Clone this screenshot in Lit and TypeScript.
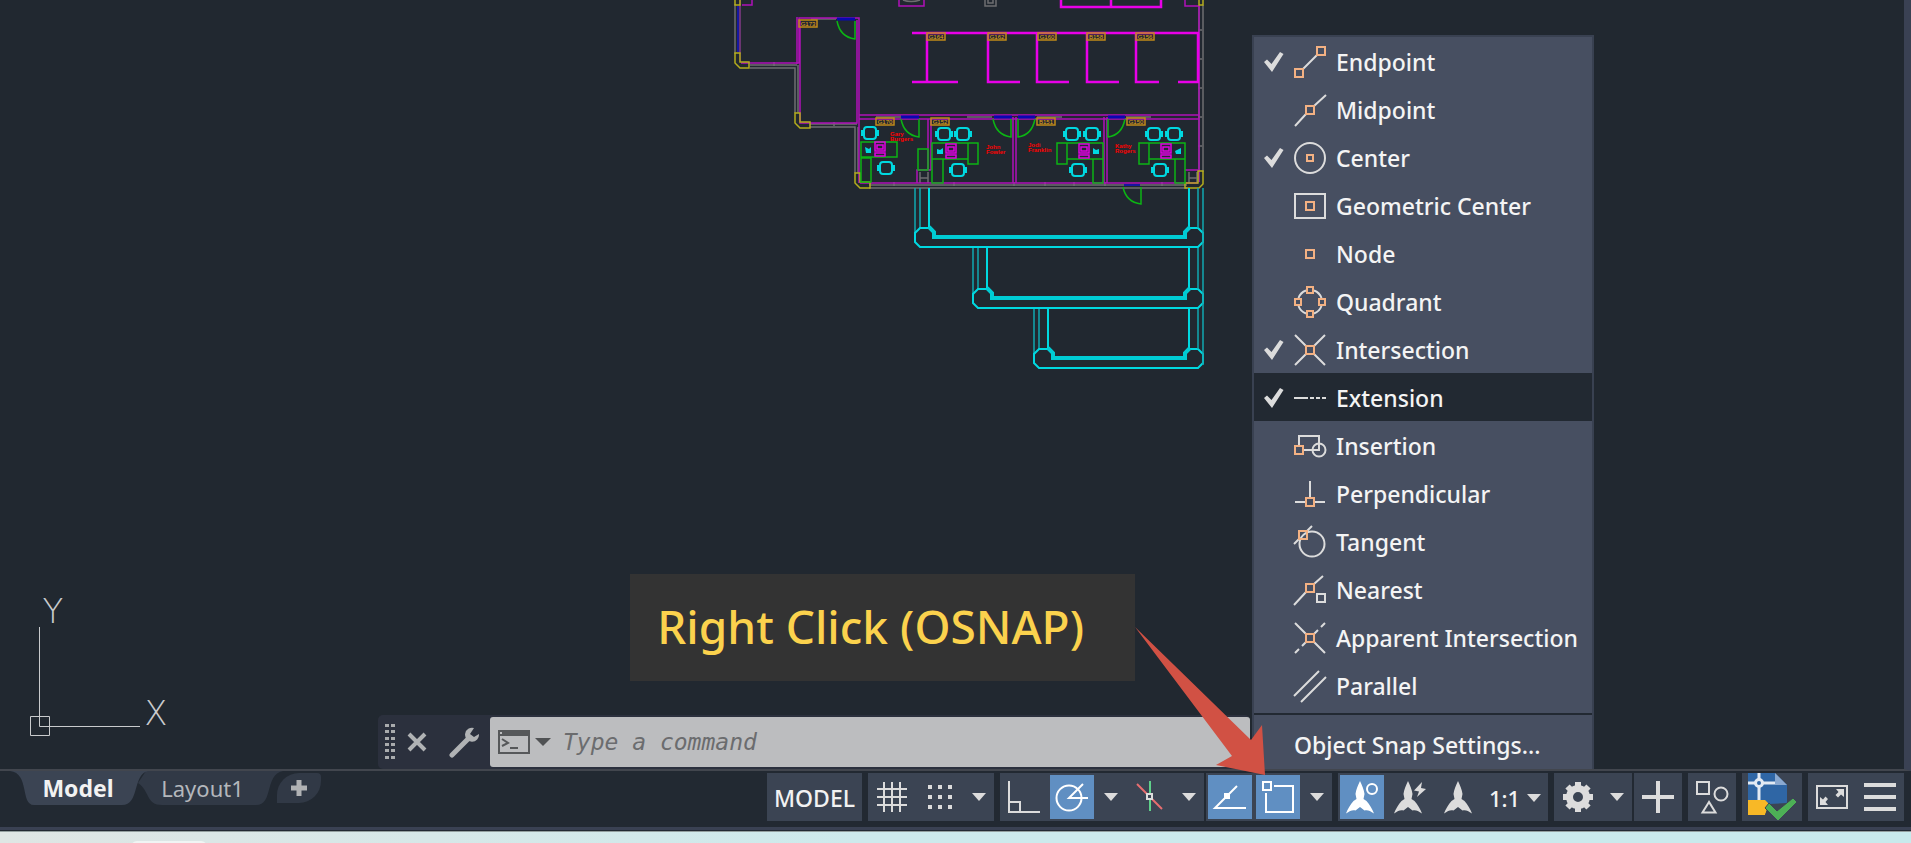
import { LitElement, html, svg, css } from "lit";
import { customElement, state } from "lit/decorators.js";
import { classMap } from "lit/directives/class-map.js";

const box = (cx: number, cy: number, s = 8) =>
  svg`<rect class="o" x=${cx - s / 2} y=${cy - s / 2} width=${s} height=${s} />`;

const snapIcons: Record<string, unknown> = {
  Endpoint: svg`<path d="M9 23L23 9" />${box(27, 5)}${box(5, 27)}`,
  Midpoint: svg`<path d="M1 32L12 20M20 12L32 1" />${box(16, 16)}`,
  Center: svg`<circle cx="16" cy="16" r="15" />${box(16, 16, 6)}`,
  "Geometric Center": svg`<rect x="1" y="4" width="30" height="24" />${box(16, 16)}`,
  Node: svg`${box(16, 16)}`,
  Quadrant: svg`<path d="M20 4.5A12.500 12.500 0 0 1 27.500 12M27.500 20A12.500 12.500 0 0 1 20 27.500M12 27.500A12.500 12.500 0 0 1 4.500 20M4.500 12A12.500 12.500 0 0 1 12 4.500" />${box(16, 4, 6)}${box(4, 16, 6)}${box(28, 16, 6)}${box(16, 28, 6)}`,
  Intersection: svg`<path d="M1 1L12 12M20 12L31 1M1 31L12 20M20 20L31 31" />${box(16, 16)}`,
  Extension: svg`<path d="M0 16H14M16 16H20M22 16H26M28 16H32" />`,
  Insertion: svg`<path d="M5 15V6H25V20H9" /><circle cx="25" cy="20" r="6.500" />${box(5, 20)}`,
  Perpendicular: svg`<path d="M16 3V20M1 24H12M20 24H31" />${box(16, 24)}`,
  Tangent: svg`<path d="M0 18L5 13M13 5L18 0" /><circle cx="18" cy="18" r="12.500" />${box(9, 9)}`,
  Nearest: svg`<path d="M0 31L12 18M20 10L29 2" />${box(16, 14)}<rect x="23" y="20" width="8" height="8" />`,
  "Apparent Intersection": svg`<path d="M1 1L12 12M20 20L31 31M20 12L24 8M27 5L31 1M1 31L5 27M8 24L12 20" />${box(16, 16)}`,
  Parallel: svg`<path d="M0 26L25 1M7 32L32 7" />`,
};

const compass = (x: number) =>
  svg`<path class="f" transform="translate(${x} 0)" d="M0 0C2 4 4 9 4.500 13L3.500 18L6.500 20C9.500 23.500 12.500 28 14 32.500C10 29.500 7 28.500 4.500 29.500L0 26L-4.500 29.500C-7 28.500 -10 29.500 -14 32.500C-12.500 28 -9.500 23.500 -6.500 20L-3.500 18L-4.500 13C-4 9 -2 4 0 0Z" />`;

const barIcons = {
  grid: svg`<path d="M8 1V31M16 1V31M24 1V31M1 8H31M1 16H31M1 24H31" />`,
  snap: svg`${[6, 16, 26].map((y) => [6, 16, 26].map((x) => svg`<rect class="f" x=${x - 2} y=${y - 2} width="4" height="4" />`))}`,
  ortho: svg`<path d="M1 0V31H32M1 21H12V31" />`,
  polar: svg`<circle cx="13" cy="17" r="12.500" /><path d="M32 17H13L27 3" />`,
  iso: svg`<path class="red" d="M3 3L28 28" /><path class="green" d="M16 0V30" /><rect class="hub" x="13" y="13" width="5" height="5" />`,
  track: svg`<path d="M32 27H1L23 5" /><rect class="f" x="10" y="12" width="6" height="6" />`,
  osnap: svg`<rect x="1" y="1" width="8" height="8" /><path d="M12 5H31V31H4V12" />`,
  annoVisible: svg`${compass(14)}<circle cx="26" cy="8" r="5" />`,
  annoAuto: svg`${compass(14)}<path class="f" d="M28 1L20 9.500L25 10.500L23 16L32 8L27 7Z" />`,
  annoScale: svg`${compass(16)}`,
  gear: svg`<circle cx="16" cy="16" r="8.500" class="gear" /><path class="teeth" d="M16 1V6M16 26V31M1 16H6M26 16H31M5.500 5.500L9 9M23 23L26.500 26.500M5.500 26.500L9 23M23 9L26.500 5.500" />`,
  plus: svg`<path class="heavy" d="M16 0V32M0 16H32" />`,
  isolate: svg`<rect x="1" y="1" width="12" height="12" /><circle cx="25" cy="13" r="6.500" /><path d="M13 21L6.500 31.500H19.500Z" />`,
  full: svg`<rect x="1" y="5" width="30" height="22" /><path class="f" d="M20 8H28V16L25 13.500L22 16.500L19.500 14L22.500 11Z M4 24V16L7 18.500L9.500 15.500L12 18L9.500 21L12 24Z" />`,
  menu: svg`<path class="heavy" d="M0 4H32M0 16H32M0 28H32" />`,
};

type IconName = keyof typeof barIcons;

const sharedIcon = css`
  svg { display: block; fill: none; stroke: #dcdcdc; stroke-width: 2; }
  .f { fill: #dcdcdc; stroke: none; }
`;

@customElement("floor-plan")
class FloorPlan extends LitElement {
  static styles = css`
    :host { display: block; }
    svg { display: block; fill: none; overflow: hidden; }
    .gray { stroke: #6d6e70; stroke-width: 1.500; }
    .mag { stroke: #b010b8; stroke-width: 1.500; }
    .magb { stroke: #e800e8; stroke-width: 2.500; }
    .pc { stroke: #e000e0; stroke-width: 1.500; }
    .yel { stroke: #b5ad1c; stroke-width: 1.500; }
    .blue { stroke: #0808b0; stroke-width: 3; }
    .green { stroke: #0cb414; stroke-width: 1.500; }
    .cy { stroke: #00d8e0; stroke-width: 2; }
    .cyd { stroke: #10a8b0; stroke-width: 1.500; }
    .cyf { fill: #00d8e0; }
    .bar { stroke: #00ccd4; stroke-width: 4; }
    .tag { stroke: #c08a18; stroke-width: 1.500; }
    .tagt { fill: #e8a818; font: 6px "Liberation Sans", sans-serif; text-anchor: middle; }
    .name { fill: #ff0000; font: bold 6px "Liberation Sans", sans-serif; }
    .ucs { stroke: #c9cbcd; stroke-width: 1; }
    .axis { fill: #c9cbcd; font: 200 34px "DejaVu Sans", sans-serif; text-anchor: middle; }
  `;

  private tag(x: number, y: number, t: string) {
    return svg`<rect class="tag" x=${x} y=${y} width="18" height="7" /><text class="tagt" x=${x + 9} y=${y + 6}>${t}</text>`;
  }

  private chair(x: number, y: number) {
    return svg`<rect class="cy" x=${x - 6} y=${y - 6} width="12" height="12" rx="3" /><path class="cy" d="M${x - 8} ${y - 3}V${y + 3}M${x + 8} ${y - 3}V${y + 3}" />`;
  }

  private computer(x: number, y: number) {
    return svg`<path class="pc" d="M${x - 5} ${y - 7}h10v9h-10zM${x - 5} ${y + 4}h10v3h-10zM${x - 3} ${y - 4}h6v4h-6z" />`;
  }

  private stair(left: number, top: number, y: number) {
    return svg`
      <path class="cyd" d="M${left} ${top}V${y + 5}M${left + 5} ${top}V${y}" />
      <path class="cy" d="M${left + 14} ${top}V${y}M1189 ${top}V${y}" />
      <path class="cy" d="M${left + 14} ${y}H${left + 5}L${left} ${y + 5}V${y + 14}L${left + 5} ${y + 19}H1198L1203 ${y + 14}V${y + 5}L1198 ${y}H1189" />
      <path class="bar" d="M${left + 14} ${y - 1}L${left + 19} ${y + 4}V${y + 9}H1185V${y + 4}L1190 ${y - 1}" />`;
  }

  render() {
    return html`<svg width="1250" height="769" viewBox="0 0 1250 769" role="img" aria-label="Floor plan drawing">
      <path class="gray" d="M735 4V54M740 4V54M750 65H797M750 68H795V113M798 65V113M810 124H857M810 127H855V173M858 127V173M869 185H1187M869 188H1187M1199 5V172M1203 5V172" />
      <path class="gray" d="M811 19H836M876 117H905M967 117H992M1037 117H1062M1126 117H1151M985 0V6H996V0M988 0V3H993V0M903 0Q911 3 920 0M920 172V183M928 172V183M920 178H928M1189 172V183M1197 172V183M1189 178H1197" />
      <path class="gray" d="M774 62V66M834 122V126M894 182V186M954 182V186M1014 182V186M1045 182V186M1074 182V186M1105 182V186M1162 182V186M1198 30H1202M1198 59H1202M1198 88H1202M1198 117H1202M1198 146H1202" />
      <path class="mag" d="M742 5H752V0M741 63H799V18H859V183M797 64V17M800 20V123H857V20M859 115H1199M859 119H1199M860 183H1198M928 119V170M931 119V170M1013 117V183M1016 117V183M1104 117V183M1107 117V183M1199 6V182M899 0V6H924V0M1185 0V6H1199M917 183V170H931M1185 170H1198" />
      <path class="magb" d="M1061 0V7H1161V0M1111 0V7M912 33H1199M927 33V82M912 82H958M988 33V82H1020M1037 33V82H1069M1087 33V82H1119M1136 33V82H1159M1178 82H1198V33" />
      <path stroke="#7a1084" d="M740 0V62" />
      <path class="blue" d="M837 19H855M901 117H919M994 117H1012M1018 117H1035M1108 117H1125" />
      <path stroke="#1717a0" stroke-width="2" d="M738 6V52M1124 185H1140" />
      <path class="yel" d="M735 0V5H740V0M735 53H740V62H749V68H740L735 63ZM795 113H800V122H810V128H800L795 123ZM855 173H860V182H870V188H860L855 183ZM1198 171H1203V184L1199 188H1185V183H1198ZM1199 0V5H1203V0" />
      <path class="green" d="M837 21Q840 37 855 39V21M901 119Q904 135 919 137V119M993 119Q996 135 1011 137V119M1035 119Q1032 135 1018 137V119M1125 119Q1122 135 1108 137V119M1123 187Q1126 202 1141 204V187" />
      <path class="green" d="M861 142H897V157H861ZM861 158H871V182H861ZM918 149H928V170H918ZM932 143H968V159H932ZM932 159H943V183H932ZM968 143H978V164H968ZM1057 143H1067V164H1057ZM1067 143H1103V159H1067ZM1093 159H1103V183H1093ZM1139 143H1149V164H1139ZM1149 143H1185V159H1149ZM1175 159H1185V183H1175Z" />
      ${[[870, 133], [886, 168], [944, 134], [963, 134], [958, 170], [1072, 134], [1092, 134], [1078, 170], [1154, 134], [1174, 134], [1160, 170]].map(([x, y]) => this.chair(x, y))}
      ${[[880, 149], [951, 151], [1084, 151], [1166, 151]].map(([x, y]) => this.computer(x, y))}
      <path class="cyf" d="M865 147L869 149L871 147V153H866ZM937 149L940 150L943 148V154H937ZM1093 148L1096 150L1099 149V154H1093ZM1175 151L1181 148V154H1176Z" />
      ${[[799, 20, "G173"], [927, 33, "G164"], [988, 33, "G162"], [1038, 33, "G160"], [1087, 33, "B158"], [1136, 33, "G156"], [876, 118, "G170"], [931, 118, "G152"], [1037, 118, "B151"], [1127, 118, "G150"]].map(([x, y, t]) => this.tag(x as number, y as number, t as string))}
      ${[[890, 136, "Gary", "Burgers"], [986, 149, "John", "Fowler"], [1028, 147, "Jodi", "Franklin"], [1115, 148, "Kathy", "Rogers"]].map(([x, y, a, b]) => svg`<text class="name" x=${x} y=${y}>${a}</text><text class="name" x=${x} y=${(y as number) + 5}>${b}</text>`)}
      ${this.stair(915, 188, 228)}${this.stair(973, 248, 289)}${this.stair(1034, 309, 349)}
      <path class="cyd" d="M1203 188V365M1198 188V228M1198 248V289M1198 309V349" />
      <path class="ucs" d="M39.500 627V726.500H140M30.500 716.500H49.500V735.500H30.500Z" />
      <text class="axis" x="53" y="623">Y</text>
      <text class="axis" x="156" y="725">X</text>
    </svg>`;
  }
}

@customElement("snap-menu")
class SnapMenu extends LitElement {
  @state() private checked = new Set(["Endpoint", "Center", "Intersection", "Extension"]);

  static styles = [sharedIcon, css`
    :host { display: block; background: #474f61; border: 2px solid #394151; border-bottom: 0; }
    button {
      display: flex; align-items: center; gap: 10px; width: 100%; height: 48px; padding: 2px 16px 0 10px;
      border: 0; background: none; color: #f4f4f4; text-align: left; white-space: nowrap;
      font: 500 23px/32px "Noto Sans", "Open Sans", sans-serif;
    }
    .current { background: #222932; }
    .tick { flex: none; width: 20px; height: 20px; }
    .icon { flex: none; width: 32px; height: 32px; overflow: visible; }
    .o { stroke: #f3b183; }
    hr { height: 2px; margin: 4px 0 0; border: 0; background: #222932; }
    .settings { height: 54px; padding: 5px 0 0 40px; }
  `];

  private toggle(name: string) {
    const next = new Set(this.checked);
    next.has(name) ? next.delete(name) : next.add(name);
    this.checked = next;
  }

  render() {
    return html`<div role="menu" aria-label="Object snap">
      ${Object.entries(snapIcons).map(([name, icon]) => html`
        <button role="menuitemcheckbox" aria-checked=${this.checked.has(name)} class=${classMap({ current: name === "Extension" })} @click=${() => this.toggle(name)}>
          <svg class="tick" viewBox="0 0 20 20">${this.checked.has(name) ? svg`<path class="f" d="M0 10L3 7.500L7.500 12L16 0L19.500 2L8 20Z" />` : null}</svg>
          <svg class="icon" viewBox="0 0 32 32">${icon}</svg>
          <span>${name}</span>
        </button>`)}
      <hr />
      <button role="menuitem" class="settings">Object Snap Settings...</button>
    </div>`;
  }
}

@customElement("command-line")
class CommandLine extends LitElement {
  static styles = css`
    :host { display: flex; height: 54px; background: #2b303d; border-radius: 5px; }
    button { display: flex; align-items: center; justify-content: center; padding: 0; border: 0; background: none; }
    svg { display: block; }
    .grip { width: 10px; margin: 0 8px 0 7px; fill: #a9abad; align-self: center; }
    .close { width: 28px; }
    .wrench { width: 59px; padding-left: 8px; box-sizing: border-box; }
    .field { display: flex; flex: 1; align-items: center; margin: 2px 0; background: #bcbdbf; border-radius: 3px; }
    .recent { gap: 5px; padding: 0 8px; }
    input {
      flex: 1; min-width: 0; height: 48px; padding: 0 4px; border: 0; outline: 0; background: none; color: #333;
      font: italic 23px/32px "DejaVu Sans Mono", monospace;
    }
    input::placeholder { color: #6b6c6e; opacity: 1; }
  `;

  render() {
    return html`
      <svg class="grip" width="10" height="38" viewBox="0 0 10 38">${[1, 7, 14, 20, 26, 33].map((y) => svg`<path d="M0 ${y}h4v3h-4zM6 ${y}h4v3h-4z" />`)}</svg>
      <button class="close" aria-label="Close"><svg width="20" height="20" viewBox="0 0 20 20" stroke="#b0b2b4" stroke-width="4"><path d="M2 2L18 18M18 2L2 18" /></svg></button>
      <button class="wrench" aria-label="Customize"><svg width="32" height="32" viewBox="0 0 32 32" fill="none"><path d="M3 29L20 12" stroke="#b0b2b4" stroke-width="5" stroke-linecap="round" /><path d="M25 2A7 7 0 1 0 30 8L25 11L21 8Z" fill="#b0b2b4" /></svg></button>
      <div class="field">
        <button class="recent" aria-label="Recent commands">
          <svg width="32" height="24" viewBox="0 0 32 24" fill="none" stroke="#56585a" stroke-width="2"><path d="M1 1H31V23H1Z" /><path fill="#56585a" stroke="none" d="M0 0H32V6H0Z" /><path d="M4 9L10 13L4 16" /><path d="M12 18H20" /><path stroke="#bcbdbf" d="M2 3H4" /></svg>
          <svg width="16" height="8" viewBox="0 0 16 8" fill="#505254"><path d="M0 0H16L8 8Z" /></svg>
        </button>
        <input type="text" aria-label="Command" placeholder="Type a command" />
      </div>`;
  }
}

@customElement("status-bar")
class StatusBar extends LitElement {
  static styles = [sharedIcon, css`
    :host { display: flex; justify-content: space-between; align-items: flex-start; height: 54px; padding: 2px 7px 0 10px; background: #222932; }
    button {
      display: flex; align-items: center; justify-content: center; flex: none; height: 44px; padding: 0; border: 0; background: none;
      color: #f2f2f2; font: 500 23px/32px "Noto Sans", "Open Sans", sans-serif; white-space: nowrap;
    }
    .tabs { display: flex; margin-top: -2px; }
    .tab { position: relative; height: 34px; }
    .tab span { position: relative; }
    .tab .shape { position: absolute; top: 0; left: 0; width: 100%; height: 100%; stroke: none; fill: #313946; }
    .tab.on .shape { fill: #3b4453; }
    .model { width: 138px; padding-right: 2px; font-weight: 700; z-index: 1; }
    .layout { width: 145px; margin-left: -10px; padding-right: 16px; color: #b4b7bc; font-size: 22px; font-weight: 400; }
    .add { width: 44px; height: 30px; margin: 2px 0 0 -6px; background: #313946; border-radius: 22px 4px 22px 0; }
    .add svg { stroke: #b0b2b4; stroke-width: 5; }
    .groups { display: flex; gap: 6px; }
    .group { display: flex; align-items: center; height: 48px; background: #3b4453; }
    .tight { margin-left: -4px; }
    .space { width: 95px; padding-top: 2px; }
    .tool { width: 44px; margin: 0 2px; }
    .tool svg { width: 32px; height: 32px; overflow: visible; }
    .on-tool { background: #608fc2; }
    .on-tool svg { stroke: #fff; }
    .on-tool .f { fill: #fff; }
    .drop { width: 30px; }
    .drop svg, .scale svg { fill: #dcdcdc; stroke: none; }
    .scale { width: 66px; padding: 2px 0 0; gap: 7px; font-size: 22px; }
    .doc { width: 60px; height: 48px; }
    .red { stroke: #e86f70; } .green { stroke: #5fd08a; } .hub { fill: #3b4453; }
    .heavy { stroke-width: 4; } .gear { stroke-width: 7; } .teeth { stroke-width: 6; }
  `];

  private tool(name: IconName, label: string, on = false) {
    return html`<button class=${classMap({ tool: true, "on-tool": on })} aria-label=${label} aria-pressed=${on}><svg viewBox="0 0 32 32">${barIcons[name]}</svg></button>`;
  }

  private caret() {
    return html`<svg width="14" height="8" viewBox="0 0 14 8"><path d="M0 0H14L7 8Z" /></svg>`;
  }

  private drop(label: string) {
    return html`<button class="drop" aria-label=${label}>${this.caret()}</button>`;
  }

  render() {
    return html`
      <nav class="tabs" aria-label="Layouts">
        <button class="tab model on"><svg class="shape" viewBox="0 0 138 34" preserveAspectRatio="none"><path d="M0 0C20 2 10 34 24 34H112C130 34 122 4 138 0Z" /></svg><span>Model</span></button>
        <button class="tab layout"><svg class="shape" viewBox="0 0 145 34" preserveAspectRatio="none"><path d="M8 0H145C126 4 136 34 118 34H24C8 34 12 20 0 12Z" /></svg><span>Layout1</span></button>
        <button class="add" aria-label="New layout"><svg width="16" height="16" viewBox="0 0 16 16"><path d="M8 0V16M0 8H16" /></svg></button>
      </nav>
      <div class="groups">
        <div class="group"><button class="space">MODEL</button></div>
        <div class="group">${this.tool("grid", "Grid")}${this.tool("snap", "Snap")}${this.drop("Snap options")}</div>
        <div class="group">${this.tool("ortho", "Ortho")}${this.tool("polar", "Polar tracking", true)}${this.drop("Polar options")}${this.tool("iso", "Isometric")}${this.drop("Isometric options")}</div>
        <div class="group tight">${this.tool("track", "Snap tracking", true)}${this.tool("osnap", "Object snap", true)}${this.drop("Object snap options")}</div>
        <div class="group">${this.tool("annoVisible", "Annotation visibility", true)}${this.tool("annoAuto", "Annotation autoscale")}${this.tool("annoScale", "Annotation scale")}<button class="scale">1:1 ${this.caret()}</button></div>
        <div class="group">${this.tool("gear", "Workspace")}${this.drop("Workspace options")}</div>
        <div class="group tight">${this.tool("plus", "Annotation monitor")}</div>
        <div class="group">${this.tool("isolate", "Isolate objects")}</div>
        <div class="group"><button class="doc" aria-label="Drawing status"><svg width="49" height="48" viewBox="0 0 49 48">
          <path fill="#2f66a5" stroke="none" d="M0 0H27L39 12V38H0Z" /><path fill="#8ba9d0" stroke="none" d="M27 0L39 12H27Z" />
          <path stroke="#e3eaf3" stroke-width="3" d="M0 10H27M11 0V27" /><circle cx="11" cy="10" r="3.500" fill="#2f66a5" stroke="#e3eaf3" stroke-width="3" />
          <path fill="#f8b826" stroke="none" d="M0 27H17L21 31L17 42H0Z" /><path fill="#3b4453" stroke="none" d="M17 42L21 31L39 30V38L30 48H17Z" /><path fill="#4db056" stroke="#3b4453" stroke-width="1" d="M17 35L21 30L29 38L45 25L49 29L30 48Z" />
        </svg></button></div>
        <div class="group">${this.tool("full", "Clean screen")}${this.tool("menu", "Customization")}</div>
      </div>`;
  }
}

@customElement("app-root")
class AppRoot extends LitElement {
  static styles = css`
    :host { display: flex; flex-direction: column; height: 100vh; overflow: hidden; background: #222932; }
    .view { position: relative; flex: 1; min-height: 0; background: #212830; border-right: 7px solid #3a4153; border-bottom: 2px solid #42464e; }
    .plan { position: absolute; inset: 0 auto auto 0; }
    .command { position: absolute; left: 378px; right: 654px; bottom: 0; }
    .menu { position: absolute; right: 310px; bottom: 0; width: 338px; }
    .callout {
      position: absolute; right: 769px; bottom: 88px; margin: 0; padding: 20px 51px 23px 27px; background: #333;
      color: #fbd24d; font: 500 46px/64px "Noto Sans", "Open Sans", sans-serif; white-space: nowrap;
    }
    .arrow { position: absolute; right: 639px; bottom: -6px; fill: #d15144; }
    .edge { height: 3px; background: #3a4153; border-bottom: 1px solid #222932; }
    .desktop { height: 11px; border-top: 1px solid #94a09f; background: linear-gradient(90deg, #dfe6e4, #cdeaec 45%, #c8eaec); overflow: hidden; }
    .thumb { width: 76px; height: 12px; margin: 9px 0 0 131px; border-radius: 6px; background: #f0f5f4; }
  `;

  render() {
    return html`
      <main class="view">
        <floor-plan class="plan"></floor-plan>
        <command-line class="command"></command-line>
        <snap-menu class="menu"></snap-menu>
        <p class="callout">Right Click (OSNAP)</p>
        <svg class="arrow" width="130" height="148" viewBox="0 0 130 148"><path d="M0 0L116 113L127 98L130 148L81 138L97 129Z" /></svg>
      </main>
      <status-bar></status-bar>
      <div class="edge"></div>
      <div class="desktop"><div class="thumb"></div></div>`;
  }
}
